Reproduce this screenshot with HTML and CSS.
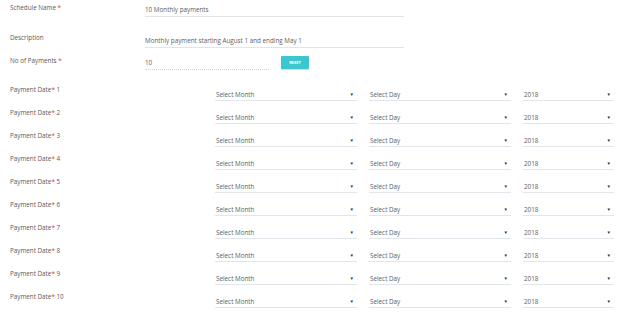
FILE: index.html
```html
<!DOCTYPE html>
<html lang="en">
<head>
  <meta charset="UTF-8" />
  <title>Payment Schedule</title>
  <link rel="stylesheet" href="styles.css">
</head>
<body>
  <div class="schedule-form">

    <div class="row row-name">
      <div class="label">Schedule Name <span class="req">*</span></div>
      <div class="text-input wide">10 Monthly payments</div>
    </div>

    <div class="row row-desc">
      <div class="label">Description</div>
      <div class="text-input wide">Monthly payment starting August 1 and ending May 1</div>
    </div>

    <div class="row row-count">
      <div class="label">No of Payments <span class="req">*</span></div>
      <div class="text-input short">10</div>
      <button class="reset-btn">RESET</button>
    </div>

    <div class="dates">
      <div class="date-row">
        <div class="label">Payment Date<span class="req">*</span> 1</div>
        <div class="select">Select Month<span class="caret">&#9660;</span></div>
        <div class="select">Select Day<span class="caret">&#9660;</span></div>
        <div class="select">2018<span class="caret">&#9660;</span></div>
      </div>
      <div class="date-row">
        <div class="label">Payment Date<span class="req">*</span> 2</div>
        <div class="select">Select Month<span class="caret">&#9660;</span></div>
        <div class="select">Select Day<span class="caret">&#9660;</span></div>
        <div class="select">2018<span class="caret">&#9660;</span></div>
      </div>
      <div class="date-row">
        <div class="label">Payment Date<span class="req">*</span> 3</div>
        <div class="select">Select Month<span class="caret">&#9660;</span></div>
        <div class="select">Select Day<span class="caret">&#9660;</span></div>
        <div class="select">2018<span class="caret">&#9660;</span></div>
      </div>
      <div class="date-row">
        <div class="label">Payment Date<span class="req">*</span> 4</div>
        <div class="select">Select Month<span class="caret">&#9660;</span></div>
        <div class="select">Select Day<span class="caret">&#9660;</span></div>
        <div class="select">2018<span class="caret">&#9660;</span></div>
      </div>
      <div class="date-row">
        <div class="label">Payment Date<span class="req">*</span> 5</div>
        <div class="select">Select Month<span class="caret">&#9660;</span></div>
        <div class="select">Select Day<span class="caret">&#9660;</span></div>
        <div class="select">2018<span class="caret">&#9660;</span></div>
      </div>
      <div class="date-row">
        <div class="label">Payment Date<span class="req">*</span> 6</div>
        <div class="select">Select Month<span class="caret">&#9660;</span></div>
        <div class="select">Select Day<span class="caret">&#9660;</span></div>
        <div class="select">2018<span class="caret">&#9660;</span></div>
      </div>
      <div class="date-row">
        <div class="label">Payment Date<span class="req">*</span> 7</div>
        <div class="select">Select Month<span class="caret">&#9660;</span></div>
        <div class="select">Select Day<span class="caret">&#9660;</span></div>
        <div class="select">2018<span class="caret">&#9660;</span></div>
      </div>
      <div class="date-row">
        <div class="label">Payment Date<span class="req">*</span> 8</div>
        <div class="select">Select Month<span class="caret">&#9660;</span></div>
        <div class="select">Select Day<span class="caret">&#9660;</span></div>
        <div class="select">2018<span class="caret">&#9660;</span></div>
      </div>
      <div class="date-row">
        <div class="label">Payment Date<span class="req">*</span> 9</div>
        <div class="select">Select Month<span class="caret">&#9660;</span></div>
        <div class="select">Select Day<span class="caret">&#9660;</span></div>
        <div class="select">2018<span class="caret">&#9660;</span></div>
      </div>
      <div class="date-row">
        <div class="label">Payment Date<span class="req">*</span> 10</div>
        <div class="select">Select Month<span class="caret">&#9660;</span></div>
        <div class="select">Select Day<span class="caret">&#9660;</span></div>
        <div class="select">2018<span class="caret">&#9660;</span></div>
      </div>
    </div>

  </div>
</body>
</html>
```

FILE: styles.css
```css
body {
  margin: 0;
  background: #fff;
  color: #666;
  font-family: "Open Sans", Arial, sans-serif;
  font-size: 6.3px;
}

.schedule-form {
  width: 620px;
  padding-top: 2px;
  border-bottom: 1px solid #e6e9ec;
}

.row {
  display: flex;
  align-items: flex-start;
  padding-left: 10px;
}

.label {
  width: 135px;
  line-height: 12px;
  color: #5a5a5a;
  flex-shrink: 0;
}

.req {
  color: #e53935;
}

.text-input {
  line-height: 12px;
  color: #606060;
  border-bottom: 1.5px solid #e1e5ea;
}

.wide {
  width: 259px;
}

.short {
  width: 124px;
  border-bottom: 1px dotted #cdd2d8;
}

/* row spacing */
.row-name {
  height: 30px;
}

.row-name .text-input {
  padding-top: 2px;
}

.row-desc {
  height: 23px;
}

.row-desc .text-input {
  padding-top: 3px;
}

.row-count {
  height: 29px;
}

.row-count .text-input {
  padding-top: 2px;
}

.reset-btn {
  margin: 1px 0 0 12px;
  width: 28px;
  height: 13px;
  padding: 0;
  border: none;
  border-radius: 1px;
  background: #3cc6d0;
  color: #fff;
  font-family: "Open Sans", Arial, sans-serif;
  font-size: 4px;
  font-weight: bold;
  box-shadow: 0 1px 1px rgba(0, 0, 0, 0.15);
}

/* Payment date grid */
.date-row {
  display: grid;
  grid-template-columns: 193px 142px 142px 91px;
  column-gap: 12px;
  height: 23px;
  padding-left: 10px;
}

.date-row .label {
  width: auto;
}

.select {
  display: flex;
  justify-content: space-between;
  align-items: center;
  height: 12px;
  padding: 4px 3px 0 1px;
  border-bottom: 1.5px solid #e1e6ec;
  color: #606060;
}

.caret {
  font-size: 4.5px;
  color: #333;
}
```
